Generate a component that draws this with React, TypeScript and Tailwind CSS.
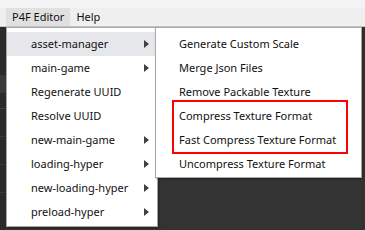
import React from "react";

const font = { fontFamily: '"Noto Sans", "Open Sans", sans-serif' };

type Item = { label: string; sub?: boolean; active?: boolean };

const mainItems: Item[] = [
  { label: "asset-manager", sub: true, active: true },
  { label: "main-game", sub: true },
  { label: "Regenerate UUID" },
  { label: "Resolve UUID" },
  { label: "new-main-game", sub: true },
  { label: "loading-hyper", sub: true },
  { label: "new-loading-hyper", sub: true },
  { label: "preload-hyper", sub: true },
];

const subItems = [
  "Generate Custom Scale",
  "Merge Json Files",
  "Remove Packable Texture",
  "Compress Texture Format",
  "Fast Compress Texture Format",
  "Uncompress Texture Format",
];

function Arrow() {
  return (
    <svg width="5" height="8" viewBox="0 0 5 8" className="shrink-0">
      <path d="M0 0 L5 4 L0 8 Z" fill="#404040" />
    </svg>
  );
}

export default function App() {
  return (
    <div
      className="relative w-[365px] h-[230px] overflow-hidden bg-[#333333] text-[11px] text-[#111]"
      style={font}
    >
      {/* top chrome + menubar */}
      <div className="h-[8px] bg-[#f3f2f5]" />
      <div className="h-[19px] bg-[#efefef] flex items-stretch pl-[6px] border-b border-[#c8c8c8]">
        <div className="px-[6px] bg-[#e0e0e0] flex items-center">P4F Editor</div>
        <div className="px-[6px] flex items-center">Help</div>
      </div>

      {/* left panel remnants behind the menu */}
      <div className="flex flex-col w-[6px] h-[203px] bg-[#2b2b2b]">
        <div className="h-[48px]" />
        <div className="h-[18px] bg-[#3a3a3a]" />
        <div className="h-[16px] border-b border-[#444]" />
        <div className="h-[28px] border-b border-[#3a3a3a]" />
        <div className="h-[28px] border-b border-[#3a3a3a]" />
        <div className="h-[28px] border-b border-[#3a3a3a]" />
      </div>

      {/* main dropdown */}
      <div className="absolute left-[6px] top-[27px] w-[152px] h-[200px] bg-white border border-[#a7a7a7] shadow-[1px_1px_2px_rgba(0,0,0,0.35)] pt-[4px]">
        {mainItems.map((it) => (
          <div
            key={it.label}
            className={`h-[24px] flex items-center justify-between pl-[24px] pr-[8px] ${
              it.active ? "bg-[#e6e7eb]" : ""
            }`}
          >
            <span>{it.label}</span>
            {it.sub && <Arrow />}
          </div>
        ))}
      </div>

      {/* submenu */}
      <div className="absolute left-[155px] top-[27px] w-[207px] h-[151px] bg-white border border-[#a7a7a7] shadow-[1px_1px_2px_rgba(0,0,0,0.35)] pt-[4px]">
        {subItems.map((s) => (
          <div key={s} className="h-[24px] flex items-center pl-[23px]">
            {s}
          </div>
        ))}
        {/* highlight box */}
        <div className="absolute left-[16px] top-[72px] w-[176px] h-[54px] border-2 border-[#ff0000]" />
      </div>
    </div>
  );
}
